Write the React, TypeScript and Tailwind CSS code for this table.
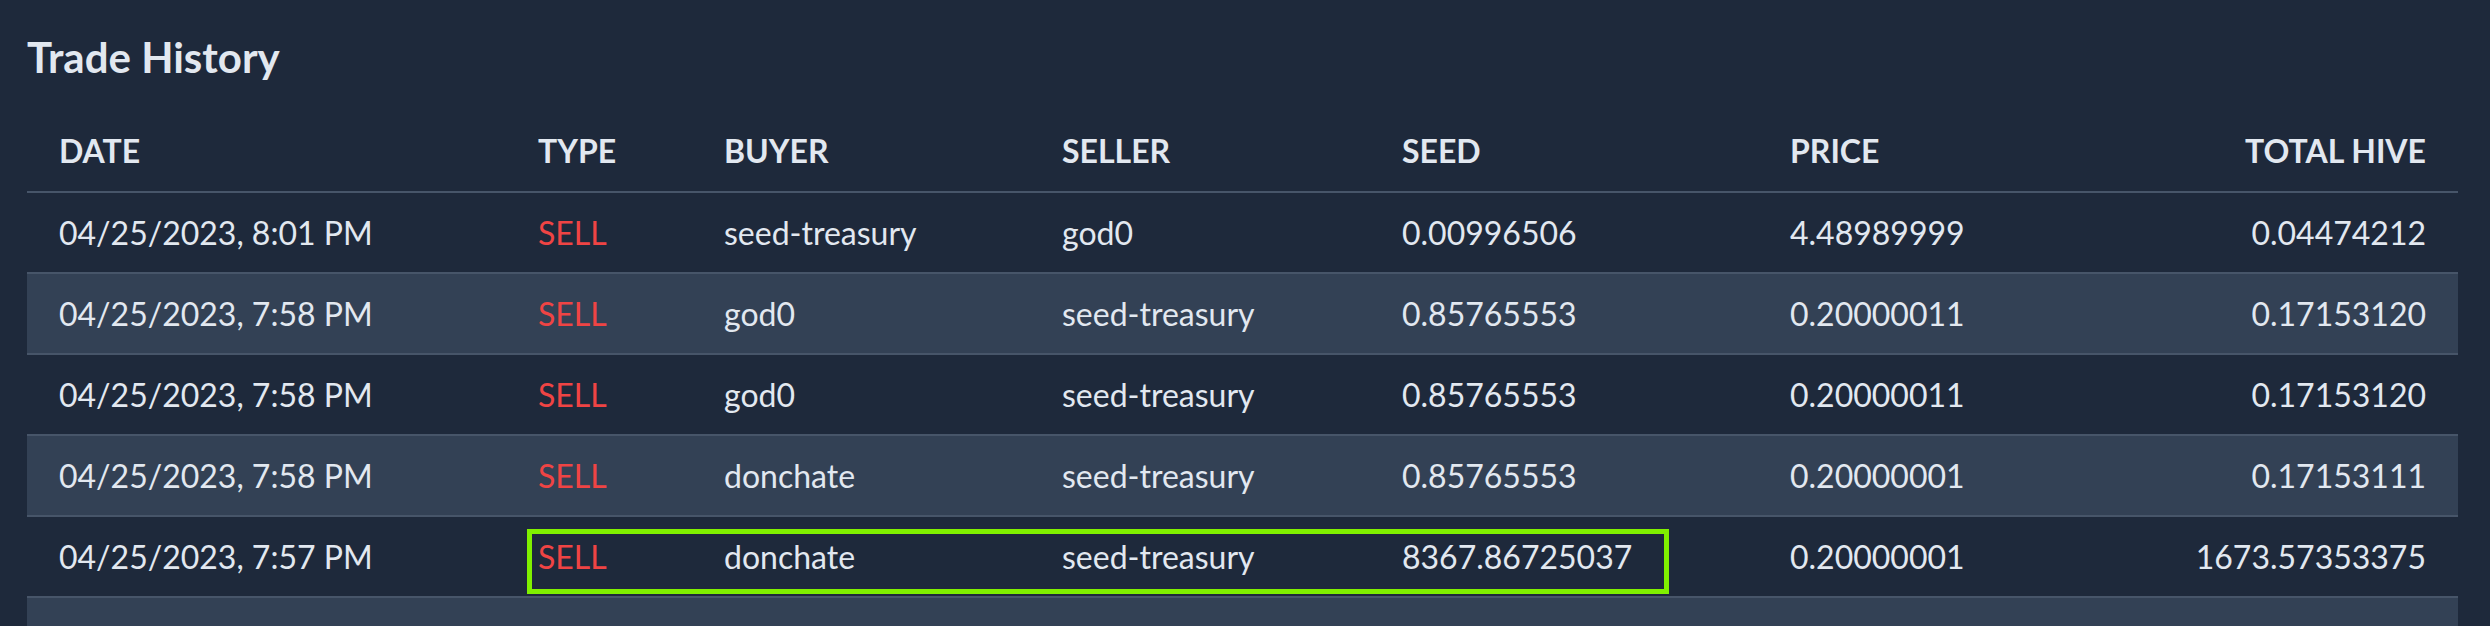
import React from 'react';

type Trade = {
  date: string;
  type: string;
  buyer: string;
  seller: string;
  seed: string;
  price: string;
  total: string;
};

const trades: Trade[] = [
  { date: '04/25/2023, 8:01 PM', type: 'SELL', buyer: 'seed-treasury', seller: 'god0', seed: '0.00996506', price: '4.48989999', total: '0.04474212' },
  { date: '04/25/2023, 7:58 PM', type: 'SELL', buyer: 'god0', seller: 'seed-treasury', seed: '0.85765553', price: '0.20000011', total: '0.17153120' },
  { date: '04/25/2023, 7:58 PM', type: 'SELL', buyer: 'god0', seller: 'seed-treasury', seed: '0.85765553', price: '0.20000011', total: '0.17153120' },
  { date: '04/25/2023, 7:58 PM', type: 'SELL', buyer: 'donchate', seller: 'seed-treasury', seed: '0.85765553', price: '0.20000001', total: '0.17153111' },
  { date: '04/25/2023, 7:57 PM', type: 'SELL', buyer: 'donchate', seller: 'seed-treasury', seed: '8367.86725037', price: '0.20000001', total: '1673.57353375' },
];

const cols = 'grid grid-cols-[479px_186px_338px_340px_388px_1fr_1fr]';

const App: React.FC = () => {
  return (
    <div
      className="h-[626px] overflow-hidden bg-[#1e293b] text-[#e2e8f0] pl-[27px] pr-[32px] pt-[29px]"
      style={{ fontFamily: 'Lato, "Open Sans", sans-serif' }}
    >
      {/* Title */}
      <h2 className="text-[42px] leading-[56px] font-bold">Trade History</h2>

      {/* Header */}
      <div className={`${cols} mt-[42px] pb-[16px] border-b-2 border-[#475569] text-[32px] leading-[48px] font-bold uppercase`}>
        <div className="px-8">Date</div>
        <div className="px-8">Type</div>
        <div className="px-8">Buyer</div>
        <div className="px-8">Seller</div>
        <div className="px-8">Seed</div>
        <div className="px-8">Price</div>
        <div className="px-8 text-right">Total Hive</div>
      </div>

      {/* Rows */}
      {trades.map((t, i) => (
        <div
          key={i}
          className={`${cols} relative h-[81px] items-center border-b-2 border-[#475569] text-[32px] leading-[48px] ${i % 2 === 1 ? 'bg-[#334155]' : ''}`}
        >
          <div className="px-8">{t.date}</div>
          <div className="px-8 text-[#ef4444]">{t.type}</div>
          <div className="px-8">{t.buyer}</div>
          <div className="px-8">{t.seller}</div>
          <div className="px-8">{t.seed}</div>
          <div className="px-8">{t.price}</div>
          <div className="px-8 text-right">{t.total}</div>
          {i === 4 && (
            <div className="absolute left-[500px] top-[12px] w-[1142px] h-[65px] border-[5px] border-[#80f000] pointer-events-none" />
          )}
        </div>
      ))}
      <div className="h-[81px] bg-[#334155]" />
    </div>
  );
};

export default App;
